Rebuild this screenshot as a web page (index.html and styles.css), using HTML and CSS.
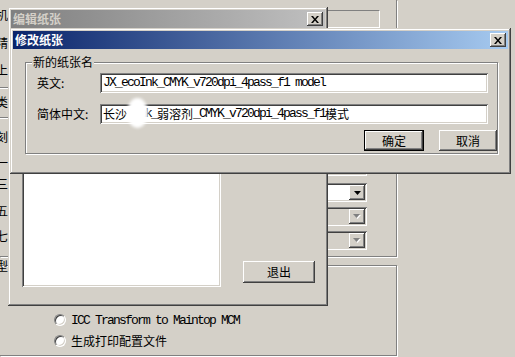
FILE: index.html
```html
<!DOCTYPE html>
<html lang="zh-CN">
<head>
<meta charset="utf-8">
<title>修改纸张</title>
<link rel="stylesheet" href="styles.css">
</head>
<body>
<div class="desktop">
  <div class="app">
    <div class="app-panels">
      <div class="upper">
        <div class="controls">
          <div class="static-box"></div>
          <div class="combo combo-first sunken">
            <div class="combo-field"></div>
            <div class="combo-btn raised"><svg width="7" height="4" viewBox="0 0 7 4"><path d="M0 0h7L3.5 4z"/></svg></div>
          </div>
          <div class="combo sunken">
            <div class="combo-field"></div>
            <div class="combo-btn raised"><svg width="7" height="4" viewBox="0 0 7 4"><path d="M0 0h7L3.5 4z"/></svg></div>
          </div>
          <div class="combo sunken is-disabled">
            <div class="combo-field"></div>
            <div class="combo-btn raised"><svg width="8" height="5" viewBox="0 0 8 5"><path fill="#fff" d="M1 1h7L4.5 5z"/><path fill="#808080" d="M0 0h7L3.5 4z"/></svg></div>
          </div>
          <div class="combo sunken is-disabled">
            <div class="combo-field"></div>
            <div class="combo-btn raised"><svg width="8" height="5" viewBox="0 0 8 5"><path fill="#fff" d="M1 1h7L4.5 5z"/><path fill="#808080" d="M0 0h7L3.5 4z"/></svg></div>
          </div>
        </div>
      </div>
      <div class="lower">
        <label class="radio-row"><span class="radio"></span><span class="mono">ICC Transform to Maintop MCM</span></label>
        <label class="radio-row"><span class="radio"></span><span>生成打印配置文件</span></label>
      </div>
    </div>
    <div class="labels">
      <span class="lab">机</span>
      <span class="lab">精</span>
      <span class="lab">上</span>
      <span class="sep"></span>
      <span class="lab">类</span>
      <span class="sep"></span>
      <span class="lab">刻</span>
      <span class="lab">一</span>
      <span class="lab">三</span>
      <span class="lab">五</span>
      <span class="lab">七</span>
      <span class="lab">型</span>
    </div>
  </div>

  <section class="window win-edit">
    <div class="titlebar is-inactive">
      <span class="title">编辑纸张</span>
      <span class="close raised"><svg width="8" height="7" viewBox="0 0 8 7"><path d="M0 0h2l2 2.5L6 0h2L5 3.5 8 7H6L4 4.5 2 7H0l3-3.5z"/></svg></span>
    </div>
    <div class="edit-body">
      <div class="listbox sunken"></div>
      <button class="btn raised btn-exit">退出</button>
    </div>
  </section>

  <section class="window win-modify">
    <div class="titlebar is-active">
      <span class="title">修改纸张</span>
      <span class="close raised"><svg width="8" height="7" viewBox="0 0 8 7"><path d="M0 0h2l2 2.5L6 0h2L5 3.5 8 7H6L4 4.5 2 7H0l3-3.5z"/></svg></span>
    </div>
    <div class="modify-body">
      <fieldset class="group">
        <legend>新的纸张名</legend>
        <span class="field-label">英文:</span>
        <div class="textbox sunken"><span class="mono">JX_ecoInk_CMYK_v720dpi_4pass_f1 model</span></div>
        <span class="field-label">简体中文:</span>
        <div class="textbox sunken"><span>长沙</span><span class="mono"> Ink_</span><span>弱溶剂</span><span class="mono">_CMYK_v720dpi_4pass_f1</span><span>模式</span><span class="redact"></span></div>
        <div class="actions">
          <button class="btn is-default btn-ok">确定</button>
          <button class="btn raised btn-cancel">取消</button>
        </div>
      </fieldset>
    </div>
  </section>
</div>
</body>
</html>
```

FILE: styles.css
```css
* { box-sizing: border-box; }
html, body { margin: 0; padding: 0; }
body {
  width: 515px;
  height: 357px;
  overflow: hidden;
  background: #d4d0c8;
  font-family: "Noto Sans CJK SC", "Noto Sans", sans-serif;
  font-size: 12px;
  line-height: 1;
  color: #000;
}
.desktop { position: relative; width: 515px; height: 357px; }

/* classic bevels */
.raised {
  background: #d4d0c8;
  box-shadow: inset -1px -1px #404040, inset 1px 1px #fff, inset -2px -2px #808080, inset 2px 2px #d4d0c8;
}
.sunken {
  background: #fff;
  box-shadow: inset 1px 1px #808080, inset -1px -1px #fff, inset 2px 2px #404040, inset -2px -2px #d4d0c8;
}
.mono {
  font-family: "Liberation Mono", monospace;
  font-size: 13px;
  letter-spacing: -1.8px;
  white-space: pre;
}

/* background application */
.app {
  display: grid;
  grid-template-columns: 397px 1fr;
  grid-template-rows: 357px;
}
.app-panels { grid-area: 1 / 1; display: flex; flex-direction: column; }
.upper {
  height: 257px;
  border-right: 1px solid #808080;
  border-bottom: 1px solid #808080;
  box-shadow: 1px 1px 0 #fff;
}
.controls {
  display: flex;
  flex-direction: column;
  align-items: flex-end;
  padding-top: 10px;
}
.static-box {
  width: 130px;
  height: 18px;
  margin-right: 16px;
  border-top: 1px solid #808080;
  border-left: 1px solid #808080;
  border-right: 1px solid #fff;
  border-bottom: 1px solid #fff;
}
.combo {
  display: flex;
  width: 120px;
  height: 19px;
  padding: 2px;
  margin-right: 29px;
  margin-top: 5px;
}
.combo.combo-first { margin-top: 129px; }
.combo.combo-first + .combo { margin-top: 7px; }
.combo.is-disabled { background: #d4d0c8; }
.combo-field { flex: 1; }
.combo-btn {
  width: 16px;
  display: flex;
  align-items: center;
  justify-content: center;
}
.combo-btn svg { display: block; }

.lower {
  margin-top: 8px;
  height: 91px;
  border-top: 1px solid #808080;
  border-right: 1px solid #808080;
  border-bottom: 1px solid #808080;
  box-shadow: inset 0 1px #fff, 1px 1px 0 #fff;
  padding: 44px 0 0 54px;
  display: flex;
  flex-direction: column;
  gap: 1px;
}
.radio-row {
  display: flex;
  align-items: center;
  gap: 5px;
  height: 20px;
}
.radio {
  flex: none;
  width: 12px;
  height: 12px;
  border-radius: 50%;
  background: #fff;
  border: 1px solid;
  border-color: #808080 #fff #fff #808080;
  box-shadow: inset 1px 1px #404040, inset -1px -1px #d4d0c8;
}

.labels {
  grid-area: 1 / 1;
  align-self: start;
  display: flex;
  flex-direction: column;
  margin-left: -4px;
  width: 14px;
}
.lab { height: 12px; line-height: 12px; font-size: 12px; }
.sep { height: 1px; background: #808080; box-shadow: 0 1px 0 #fff; }
.labels > :nth-child(1) { margin-top: 9px; }
.labels > :nth-child(2) { margin-top: 16px; }
.labels > :nth-child(3) { margin-top: 15px; }
.labels > :nth-child(4) { margin-top: 11px; }
.labels > :nth-child(5) { margin-top: 8px; }
.labels > :nth-child(6) { margin-top: 9px; }
.labels > :nth-child(7) { margin-top: 13px; }
.labels > :nth-child(8) { margin-top: 14px; }
.labels > :nth-child(9) { margin-top: 9px; }
.labels > :nth-child(10) { margin-top: 15px; }
.labels > :nth-child(11) { margin-top: 13px; }
.labels > :nth-child(12) { margin-top: 18px; }

/* windows */
.window {
  position: absolute;
  display: flex;
  flex-direction: column;
  padding: 3px;
  background: #d4d0c8;
  box-shadow: inset -1px -1px #404040, inset 1px 1px #d4d0c8, inset -2px -2px #808080, inset 2px 2px #fff;
}
.win-edit { left: 8px; top: 7px; width: 320px; height: 299px; }
.win-modify { left: 10px; top: 28px; width: 501px; height: 146px; }

.titlebar {
  flex: none;
  height: 18px;
  display: flex;
  align-items: center;
  justify-content: space-between;
  padding: 0 2px;
}
.titlebar.is-active { background: linear-gradient(to right, #0a246a, #a6caf0); color: #fff; }
.titlebar.is-inactive { background: linear-gradient(to right, #808080, #c0c0c0); color: #d4d0c8; }
.title { font-weight: bold; font-size: 12px; line-height: 12px; }
.close {
  width: 16px;
  height: 14px;
  display: flex;
  align-items: center;
  justify-content: center;
}
.close svg { display: block; }

.btn {
  font: inherit;
  font-size: 12px;
  line-height: 1;
  border: 0;
  padding: 0;
  color: #000;
  display: flex;
  align-items: center;
  justify-content: center;
}
.btn.is-default {
  background: #d4d0c8;
  box-shadow: inset 0 0 0 1px #000, inset -2px -2px #404040, inset 2px 2px #fff, inset -3px -3px #808080;
}

.edit-body {
  flex: 1;
  display: grid;
  grid-template-columns: 199px 72px;
  grid-template-rows: 1fr;
  column-gap: 22px;
  padding: 32px 0 16px 11px;
}
.listbox { align-self: stretch; }
.btn-exit { align-self: end; height: 22px; margin-bottom: 4px; }

.modify-body { flex: 1; padding: 7px 10px 0 12px; }
.group {
  margin: 0;
  min-width: 0;
  border: 1px solid #808080;
  box-shadow: inset 1px 1px #fff, 1px 1px 0 #fff;
  padding: 5px 0 2px 6px;
  display: grid;
  grid-template-columns: 68px 388px 1fr;
  row-gap: 11px;
  align-items: center;
}
.group legend {
  padding: 0 1px;
  line-height: 12px;
  font-size: 12px;
  background: #d4d0c8;
}
.field-label { grid-column: 1; padding-left: 5px; line-height: 12px; white-space: nowrap; }
.textbox {
  grid-column: 2;
  position: relative;
  height: 20px;
  line-height: 20px;
  padding-left: 3px;
  white-space: nowrap;
  display: flex;
  align-items: center;
}
.redact {
  position: absolute;
  left: 27px;
  top: -6px;
  width: 21px;
  height: 30px;
  border-radius: 50%;
  background: #fff;
  filter: blur(1.5px);
}
.actions {
  grid-column: 1 / -1;
  margin-top: -5px;
  display: flex;
  justify-content: flex-end;
  gap: 15px;
}
.btn-ok { width: 60px; height: 21px; }
.btn-cancel { width: 58px; height: 21px; }
```
